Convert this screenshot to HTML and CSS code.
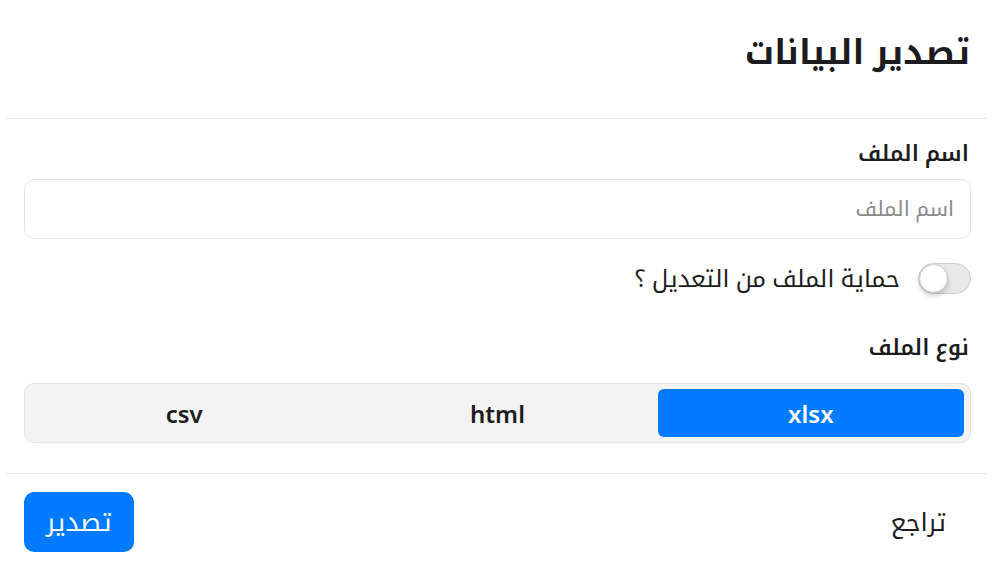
FILE: index.html
```html
<!DOCTYPE html>
<html lang="ar" dir="rtl">
<head>
<meta charset="utf-8">
<link rel="stylesheet" href="styles.css">
</head>
<body>
<div class="dialog">
  <header class="head">
    <h1 class="title">تصدير البيانات</h1>
  </header>
  <main class="body">
    <label class="label">اسم الملف</label>
    <div class="input"><span class="placeholder">اسم الملف</span></div>
    <div class="toggle-row">
      <span class="switch"><span class="knob"></span></span>
      <span class="toggle-text">حماية الملف من التعديل ؟</span>
    </div>
    <label class="label type-label">نوع الملف</label>
    <div class="segments">
      <span class="seg active">xlsx</span>
      <span class="seg">html</span>
      <span class="seg">csv</span>
    </div>
  </main>
  <footer class="foot">
    <span class="cancel">تراجع</span>
    <span class="submit">تصدير</span>
  </footer>
</div>
</body>
</html>
```
FILE: styles.css
```css
* { box-sizing: border-box; }
html, body { margin: 0; padding: 0; background: #fff; }
body {
  font-family: "Noto Sans", "Noto Kufi Arabic", "DejaVu Sans", sans-serif;
  color: #1c1c1e;
  width: 1004px;
  height: 566px;
  overflow: hidden;
}
.dialog { width: 1004px; }
.head {
  margin: 0 17px 0 6px;
  padding: 27px 17px 0 0;
  height: 119px;
  border-bottom: 1px solid #e3e3e3;
}
.title {
  margin: 0;
  font-size: 34px;
  font-weight: 700;
  line-height: 48px;
}
.body {
  padding: 0 34px 0 24px;
  display: flex;
  flex-direction: column;
}
.label {
  font-size: 22px;
  font-weight: 600;
  margin-top: 16px;
  line-height: 34px;
  height: 44px;
  padding-right: 1px;
}
.input {
  height: 60px;
  margin-right: -1px;
  border: 1px solid #e3e3e3;
  border-radius: 10px;
  display: flex;
  align-items: center;
  padding: 0 16px;
}
.placeholder { color: #8a8a8e; font-size: 21px; }
.toggle-row {
  display: flex;
  align-items: center;
  gap: 18px;
  margin-top: 24px;
  height: 31px;
}
.switch {
  width: 53px;
  height: 31px;
  border-radius: 16px;
  background: #e8e8e8;
  border: 1px solid #cfcfcf;
  position: relative;
  margin-right: -1px;
}
.knob {
  position: absolute;
  top: 0;
  left: 0;
  width: 29px;
  height: 29px;
  border-radius: 50%;
  background: #fff;
  border: 1px solid #c8c8c8;
  box-shadow: 0 3px 5px rgba(0,0,0,0.18);
}
.toggle-text { font-size: 24px; }
.type-label { margin-top: 35px; margin-bottom: 10px; }
.segments {
  height: 60px;
  margin-right: -1px;
  background: #f3f3f3;
  border: 1px solid #e3e3e3;
  border-radius: 10px;
  display: grid;
  grid-template-columns: repeat(3, 1fr);
  padding: 5px 6px;
  gap: 7px;
}
.seg {
  display: flex;
  align-items: center;
  justify-content: center;
  font-size: 24px;
  font-weight: 600;
  border-radius: 6px;
  direction: ltr;
}
.seg.active { background: #007aff; color: #fff; }
.foot {
  margin: 30px 17px 0 6px;
  border-top: 1px solid #e3e3e3;
  padding: 18px 41px 0 18px;
  display: flex;
  justify-content: space-between;
  align-items: center;
}
.cancel { font-size: 25px; }
.submit {
  background: #007aff;
  color: #fff;
  font-size: 26px;
  height: 60px;
  width: 110px;
  border-radius: 10px;
  display: flex;
  align-items: center;
  justify-content: center;
}
```
